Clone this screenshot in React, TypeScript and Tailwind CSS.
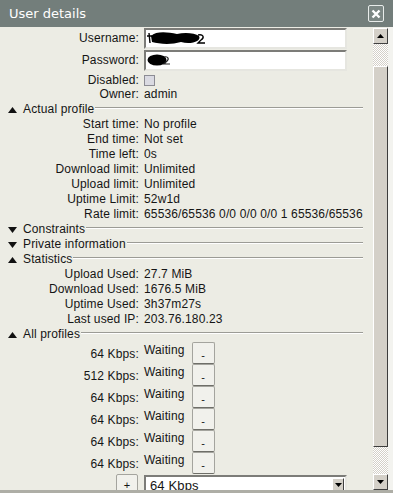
import React from 'react'

const font = { fontFamily: '"Liberation Sans", Arial, sans-serif' }

const Tri = ({ up }: { up?: boolean }) => (
  <svg width="9" height="6" viewBox="0 0 9 6" className="shrink-0">
    {up ? <path d="M0 6 L4.5 0 L9 6Z" fill="#111" /> : <path d="M0 0 L9 0 L4.5 6Z" fill="#111" />}
  </svg>
)

const Section = ({ title, up }: { title: string; up?: boolean }) => (
  <div className="flex h-[15px] items-center pl-[8px]">
    <Tri up={up} />
    <span className="ml-[6px] leading-[15px]">{title}</span>
    <div className="ml-px mt-[5px] h-[2px] flex-1 self-start border-t border-b border-t-[#9c9c96] border-b-white" />
  </div>
)

const Row = ({ label, value }: { label: string; value: string }) => (
  <div className="grid h-[15px] grid-cols-[139px_1fr] items-center gap-x-[5px] leading-[15px]">
    <span className="whitespace-nowrap text-right">{label}</span>
    <span className="whitespace-nowrap">{value}</span>
  </div>
)

const ProfileRow = ({ label }: { label: string }) => (
  <div className="grid h-[22px] grid-cols-[139px_1fr] gap-x-[5px]">
    <span className="self-center pt-px text-right">{label}</span>
    <div className="flex">
      <span className="pt-px leading-[14px]">Waiting</span>
      <div className="ml-[7px] flex h-[22px] w-[23px] items-center justify-center rounded-[2px] border border-[#a4a49e] border-b-[#6e6e68] bg-[#f1f1ec] pt-[4px] text-[11px]">-</div>
    </div>
  </div>
)

const ScrollBtn = ({ up }: { up?: boolean }) => (
  <div className="flex h-[16px] items-center justify-center border border-t-white border-l-white border-r-[#404040] border-b-[#404040] bg-[#d4d0c8]">
    <svg width="7" height="4" viewBox="0 0 7 4">
      {up ? <path d="M0 4 L3.5 0 L7 4Z" fill="#000" /> : <path d="M0 0 L7 0 L3.5 4Z" fill="#000" />}
    </svg>
  </div>
)

const Checker = ({ cls }: { cls: string }) => (
  <div className={`${cls} bg-[repeating-conic-gradient(#d4d0c8_0_25%,#ffffff_0_50%)] bg-[length:2px_2px]`} />
)

const profiles = ['64 Kbps:', '512 Kbps:', '64 Kbps:', '64 Kbps:', '64 Kbps:', '64 Kbps:']

export default function App() {
  return (
    <div className="flex h-[493px] w-[393px] flex-col overflow-hidden bg-[#ecece4] text-[12px] tracking-[0.14px] text-[#151515]" style={font}>
      <div className="flex h-[27px] shrink-0 items-center justify-between bg-[#737e7b] pl-[9px] pr-[9px]">
        <span className="text-[13px] tracking-normal text-white" style={{ fontFamily: '"DejaVu Sans", sans-serif' }}>User details</span>
        <div className="flex h-[17px] w-[16px] items-center justify-center rounded-[2px] border border-[#e8ecea] bg-[#7c8784]">
          <svg width="10" height="10" viewBox="0 0 10 10">
            <path d="M1.5 1.5 L8.5 8.5 M8.5 1.5 L1.5 8.5" stroke="#fff" strokeWidth="2.4" />
          </svg>
        </div>
      </div>

      <div className="flex min-h-0 flex-1">
        <div className="flex-1 overflow-hidden pr-[10px]">
          <div className="grid h-[22px] grid-cols-[139px_1fr] items-center gap-x-[5px]">
            <span className="text-right">Username:</span>
            <div className="flex h-[21px] w-[203px] items-center border-2 border-t-[#7c7c78] border-l-[#7c7c78] border-r-[#e6e6e0] border-b-[#e6e6e0] bg-white pl-[1px]">
              <svg width="60" height="14" viewBox="0 0 60 14">
                <path d="M2 2 L3 12 M0 5 L5 5" stroke="#000" strokeWidth="1.4" />
                <path d="M4 5 C9 0 20 1 30 3 C38 1 48 2 52 5 C55 10 44 14 34 11 C24 14 12 13 5 11Z" fill="#000" />
                <path d="M51 4 C56 3 58 6 54 9 L51 12 L58 12" stroke="#000" strokeWidth="1.4" fill="none" />
              </svg>
            </div>
          </div>
          <div className="grid h-[22px] grid-cols-[139px_1fr] items-center gap-x-[5px]">
            <span className="text-right">Password:</span>
            <div className="flex h-[21px] w-[203px] items-center border-2 border-t-[#7c7c78] border-l-[#7c7c78] border-r-[#e6e6e0] border-b-[#e6e6e0] bg-white pl-[1px]">
              <svg width="24" height="12" viewBox="0 0 24 12">
                <ellipse cx="10" cy="6" rx="9.5" ry="5.5" fill="#000" />
                <path d="M17 3 C21 2 23 5 19 8 L17 10 L23 10" stroke="#222" strokeWidth="1.2" fill="none" />
              </svg>
            </div>
          </div>
          <div className="grid h-[16px] grid-cols-[139px_1fr] items-center gap-x-[5px]">
            <span className="text-right">Disabled:</span>
            <div className="h-[11px] w-[11px] border border-[#8c8c94] bg-[#dadae2]" />
          </div>
          <Row label="Owner:" value="admin" />
          <Section title="Actual profile" up />
          <Row label="Start time:" value="No profile" />
          <Row label="End time:" value="Not set" />
          <Row label="Time left:" value="0s" />
          <Row label="Download limit:" value="Unlimited" />
          <Row label="Upload limit:" value="Unlimited" />
          <Row label="Uptime Limit:" value="52w1d" />
          <Row label="Rate limit:" value="65536/65536 0/0 0/0 0/0 1 65536/65536" />
          <Section title="Constraints" />
          <Section title="Private information" />
          <Section title="Statistics" up />
          <Row label="Upload Used:" value="27.7 MiB" />
          <Row label="Download Used:" value="1676.5 MiB" />
          <Row label="Uptime Used:" value="3h37m27s" />
          <Row label="Last used IP:" value="203.76.180.23" />
          <Section title="All profiles" up />
          {profiles.map((p, i) => (
            <ProfileRow key={i} label={p} />
          ))}
          <div className="grid h-[22px] grid-cols-[139px_1fr] gap-x-[5px]">
            <div className="flex justify-end pr-px">
              <div className="flex h-[21px] w-[22px] justify-center rounded-[2px] border border-[#a4a49e] bg-[#f1f1ec] pt-[2px] text-[11px]">+</div>
            </div>
            <div className="mt-px flex h-[21px] w-[203px] items-start justify-between border-2 border-t-[#7c7c78] border-l-[#7c7c78] border-r-[#e6e6e0] border-b-[#e6e6e0] bg-white pl-[4px] pt-[1px]">
              <span className="text-[13px] leading-[15px]">64 Kbps</span>
              <div className="mr-px flex h-[14px] w-[12px] items-center justify-center border border-t-white border-l-white border-r-[#404040] border-b-[#404040] bg-[#d4d0c8]">
                <svg width="7" height="4" viewBox="0 0 7 4"><path d="M0 0 L7 0 L3.5 4Z" fill="#000" /></svg>
              </div>
            </div>
          </div>
        </div>

        <div className="flex w-[15px] shrink-0 flex-col pt-px">
          <ScrollBtn up />
          <Checker cls="h-[22px]" />
          <div className="h-[381px] border border-t-white border-l-white border-r-[#3c3c3c] border-b-[#3c3c3c] bg-[#d4d0c8]" />
          <Checker cls="flex-1" />
          <ScrollBtn />
        </div>
        <div className="w-[5px] shrink-0 bg-[#f3f3ef]" />
      </div>
      <div className="h-[3px] shrink-0 bg-[#aeaea6]" />
    </div>
  )
}
